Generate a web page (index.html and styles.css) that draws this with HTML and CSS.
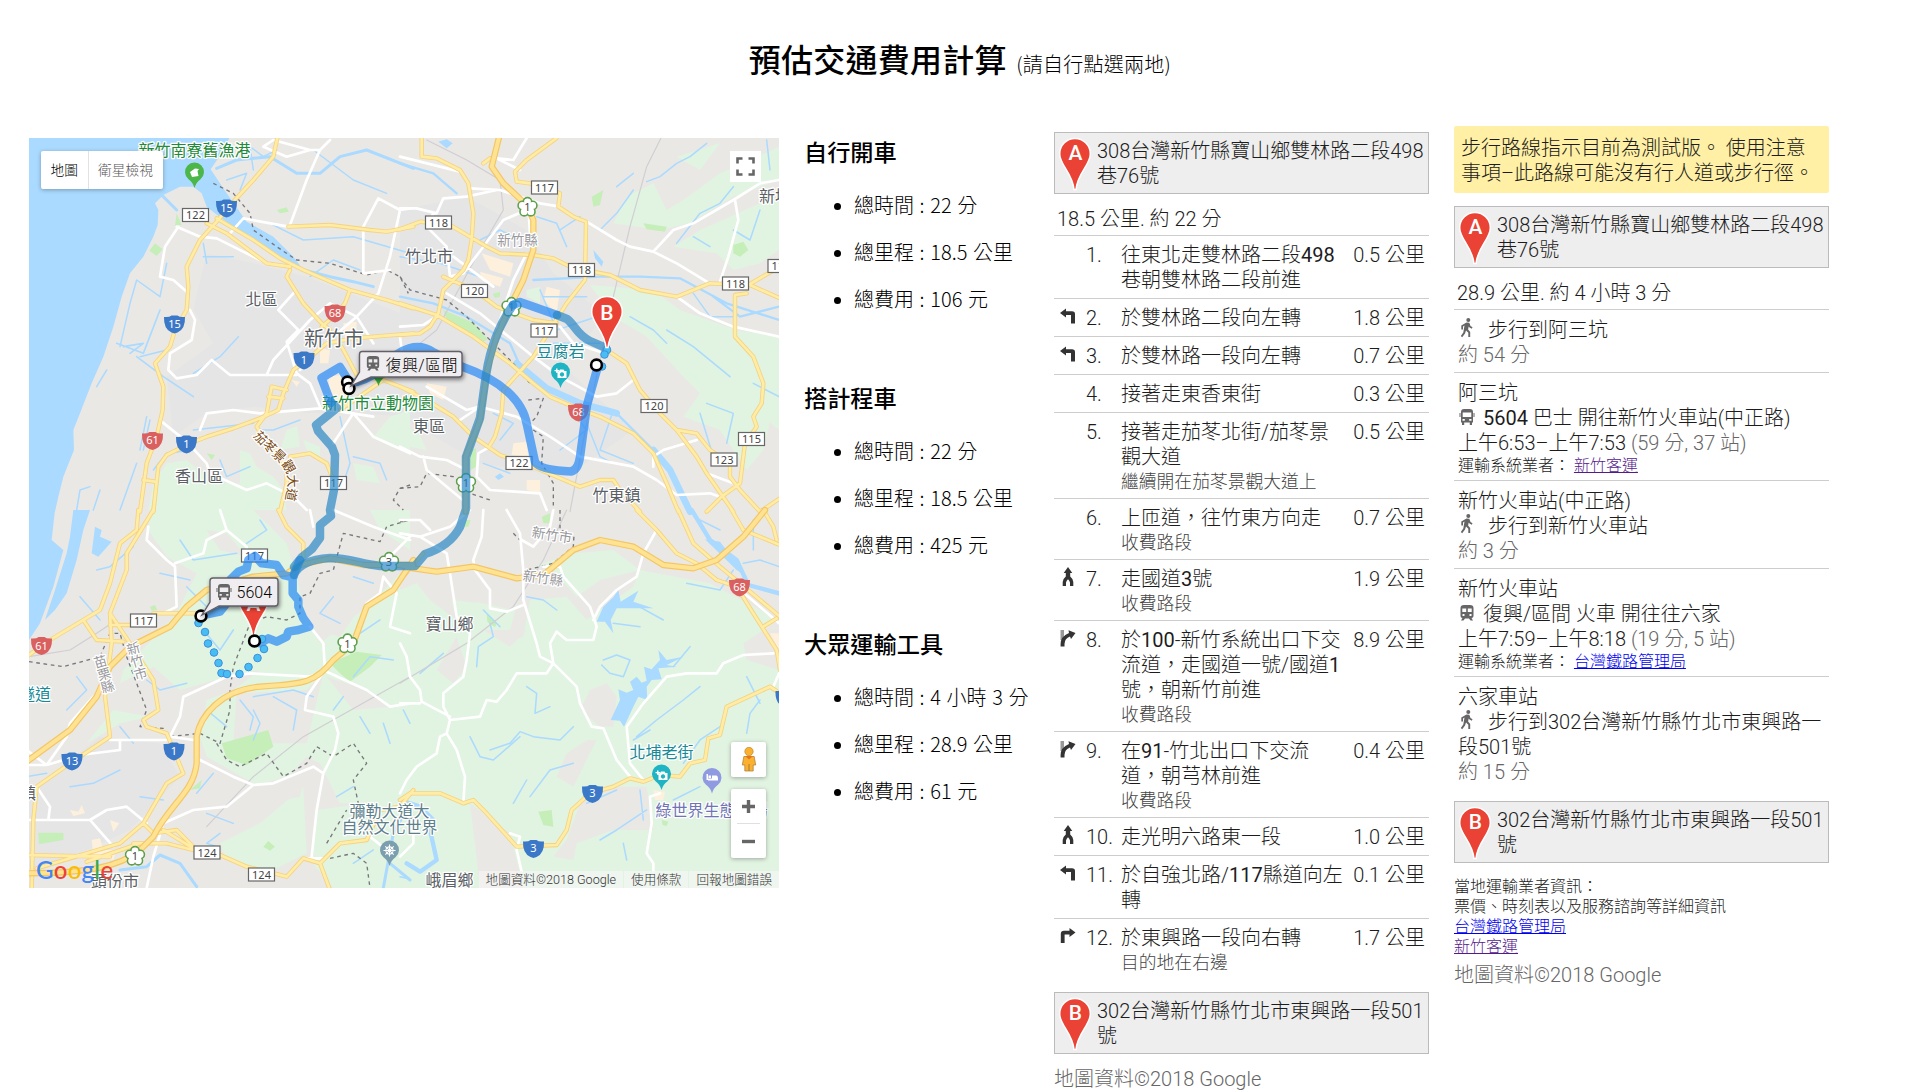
FILE: index.html
```html
<!DOCTYPE html>
<html lang="zh-Hant">
<head>
<meta charset="utf-8">
<title>預估交通費用計算</title>
<link rel="stylesheet" href="styles.css">
</head>
<body>
<svg class="sprite" width="0" height="0" aria-hidden="true">
  <defs>
    <symbol id="i-left" viewBox="0 0 16 20"><path d="M0 7 6 2.500V5.200H12Q15 5.200 15 8V17.500H11V9H6V11.500Z"/></symbol>
    <symbol id="i-right" viewBox="0 0 16 20"><path d="M15.500 6.500 9.500 2V4.800H4Q.8 4.800 .8 8V17H4.600V8.500H9.500V11Z"/></symbol>
    <symbol id="i-merge" viewBox="0 0 16 20"><path d="M8 0 12.300 6H10.200V9.500Q13.300 12 13.300 15V19H10V15.500Q9.500 13.500 8 12.300 6.500 13.500 6 15.500V19H2.700V15Q2.700 12 5.800 9.500V6H3.700Z"/></symbol>
    <symbol id="i-slight" viewBox="0 0 16 20"><path fill="#999" d="M.5 2H4V12H.5Z"/><path d="M15.500 5 8.500 2.200 9 5Q.6 8.500 .6 16V18.500H4.500V16Q4.700 10.500 10 8.600L11 11Z"/></symbol>
    <symbol id="i-walk" viewBox="0 0 14 20"><circle cx="8.300" cy="2" r="2"/><path d="M6.500 4.500 9.300 4.800 10.500 8 12.500 9.200 11.800 10.700 9.200 9.300 8.700 8.500 8.100 11.500 10.200 14V19H8.300V14.800L6 12.600 5 15.500 2.200 19.200.8 18 3.300 14.500 4.500 7.600 3 8.600V11.500H1.300V7.600Z"/></symbol>
    <symbol id="i-bus" viewBox="0 0 16 18"><path fill-rule="evenodd" d="M2 4Q2 1 5 1H11Q14 1 14 4V14.500H13V17H10.800V14.500H5.200V17H3V14.500H2ZM3.700 4.500V9H12.300V4.500ZM3.500 11V12.700H5.800V11ZM10.200 11V12.700H12.500V11ZM0.500 5H1.500V9H.5ZM14.500 5H15.500V9H14.500Z"/></symbol>
    <symbol id="i-train" viewBox="0 0 16 18"><path fill-rule="evenodd" d="M1.500 4Q1.500 1 5 1H11Q14.500 1 14.500 4V12Q14.500 14 12.500 14L14 16.500H11.500L10 14.500H6L4.500 16.500H2L3.500 14Q1.500 14 1.500 12ZM3.300 4.500V8H7.200V4.500ZM8.800 4.500V8H12.700V4.500ZM3.500 10V12H5.500V10ZM10.500 10V12H12.500V10Z"/></symbol>
    <symbol id="i-pin" viewBox="0 0 34 54"><path d="M17 1.500A15.300 15.300 0 0 1 32.300 17C32.300 28 19.500 36 18 52.500H16C14.500 36 1.700 28 1.700 17A15.300 15.300 0 0 1 17 1.500Z" fill="#ea4335" stroke="#fff" stroke-width="1.500"/></symbol>
  </defs>
</svg>

<h1 class="title">預估交通費用計算 <small>(請自行點選兩地)</small></h1>

<main class="board">
  <section class="map">
    <svg class="map-canvas" viewBox="29 138 750 750" width="750" height="750">
      <defs>
        <g id="main-roads">
          <path transform="translate(20 130) scale(.33333)" d="M775 10 760 80 700 150 640 215 590 275 540 330 500 410 505 470 500 540 465 600 450 650 405 700 430 770 428 840 410 920 380 1000 360 1145M1180 610 1000 625 920 640 860 690 820 720 790 790 775 840 720 865 640 895 560 920 510 940 440 975 415 1010 400 1145M590 265 700 330 780 385 850 420 990 480 1100 510 1180 535M560 280 620 310 740 400 810 410M810 420 800 440 850 520 905 580 930 600M990 480 975 520 940 560 905 590M805 290 930 285 1050 300 1100 305 1180 290M965 650 1010 735 1090 750 1180 785M1090 750 960 840M755 770 740 850 710 890 740 940 800 1010 800 1060 780 1145M755 770 800 780M745 800 790 805M810 980 870 970 920 1000 940 1050M370 1050 405 1055"/>
          <path transform="translate(400 130) scale(.33333)" d="M65 10V80L110 85 180 120 205 160 220 250 215 330 205 390 190 420 130 480 115 550 90 590 60 610 0 615M470 24 380 90 345 125 350 155 390 160 440 170 480 190 475 230 520 260 558 275 555 450 500 520 450 600 400 680 310 780 305 850 285 920 270 945M0 298 60 275 150 285 260 350 300 370 400 375 460 385 510 410 550 420 630 435 720 480 830 500 930 460 1050 465 1140 505M1050 462 1140 410M1040 490 1005 495V620L1060 680 1090 760 1085 820 1060 860 1070 890 1035 940 1020 1060 965 1100 920 1145M130 440 200 470 250 500 290 530 400 570 470 580M0 520 110 555 220 620 330 700 400 760 450 800 520 830 600 860 700 910 760 970 800 1060 835 1145M620 660 680 700 720 780 780 850 830 900 890 980 920 1030 1000 1145M830 900 890 910 930 960 990 1000V1040L1020 1080 1080 1145M1140 1105 1080 1145M0 770 80 810 160 860 220 920 300 975 400 1010 470 1040 540 1070 600 1050 640 1050 660 1080 720 1145M250 100 270 85"/>
          <path transform="translate(20 510) scale(.33333)" d="M400 0 320 130V180L270 310 275 400 255 560 270 680 150 760 50 830 40 930 35 1140M355 0 350 60 300 100 270 220 240 300 190 330 90 390 20 440M190 330 230 390 310 395M270 310 330 400 400 510 415 600 370 630 380 650 440 670 490 790 440 820 370 940 300 1000 50 1075M20 1035 270 1040M270 345H350M400 310H540M775 0 800 50 850 100V140M430 960 520 1015 600 1035 680 1070 800 1100 850 1045 900 1060 930 1140M900 1060 960 1000 1040 990 1080 900 1140 890 1180 840M370 940 400 970 470 960 520 1010M340 1000 440 1000 520 1020M200 1055 360 1000"/>
          <path transform="translate(400 510) scale(.33333)" d="M0 210 70 130M835 0 880 100 960 170 1140 320M710 0 770 60 830 130 890 160 950 210 1010 230 1060 310 1130 420 1140 480M1090 350 1130 325M995 0 1030 60 1140 105M1090 0 1120 50 1130 90M0 870 30 850 120 850 190 880 220 870 260 910 350 1010 470 1005 500 960 515 900 570 850 640 830 690 805 730 815 780 795 840 800 870 760 915 750 925 685 960 675 980 590 1110 530 1140 550"/>
        </g>
        <g id="freeways">
          <path transform="translate(400 130) scale(.33333)" d="M300 10 275 110 310 160 380 225 400 270V360L370 450 330 530 290 620 262 720 240 870 197 980V1145"/>
          <path transform="translate(20 510) scale(.33333)" d="M840 165 800 190 700 200 560 240 500 290 450 350 330 410 270 470 230 560 150 660 20 755M1180 150 1120 240 1040 290 1000 400 940 450C880 520 860 520 720 530 600 540 540 620 530 680V760C520 850 450 880 400 980L360 1020C300 1070 200 1090 20 1090M840 165 930 145 1030 165 1180 165"/>
          <path transform="translate(400 510) scale(.33333)" d="M0 165 40 175 110 185 220 170 350 205 430 195 520 120 600 90 700 110 790 165 880 175 950 150 1030 80 1095 0"/>
        </g>
        <path id="shield" d="M-10.500-7Q-5-6.500-3-8.500H3Q5-6.500 10.500-7 11 5 3 8.500L0 9.500-3 8.500Q-11 5-10.500-7Z"/>
        <rect id="plate" x="-13" y="-6.500" width="26" height="13" fill="#fff" stroke="#666" stroke-width="1.200"/>
        <g id="plum"><g fill="#fff" stroke="#5fa04e" stroke-width="2"><circle cy="-5.200" r="4"/><circle cx="5.200" cy="-1.500" r="4"/><circle cx="3.300" cy="4.700" r="4"/><circle cx="-3.300" cy="4.700" r="4"/><circle cx="-5.200" cy="-1.500" r="4"/></g><g fill="#fff"><circle cy="-5.200" r="3.400"/><circle cx="5.200" cy="-1.500" r="3.400"/><circle cx="3.300" cy="4.700" r="3.400"/><circle cx="-3.300" cy="4.700" r="3.400"/><circle cx="-5.200" cy="-1.500" r="3.400"/><circle r="5"/></g></g>
        <path id="poi" d="M0 15Q-1.500 9.500-6 6.300A9.500 9.500 0 1 1 6 6.300Q1.500 9.500 0 15Z"/>
        <path id="curve" d="M253 436C264 450 276 457 284 468 291 479 287 496 280 518"/>
      </defs>
      <rect x="29" y="138" width="750" height="750" fill="#eae8e5"/>

      <g class="urban">
        <path transform="translate(20 130) scale(.33333)" d="M560 370 700 400 860 440 1170 560V860L1000 850 870 850 700 830 560 850 460 920 440 740 580 640 520 540Z"/>
        <path transform="translate(400 130) scale(.33333)" d="M0 240 200 200 380 300 460 430 620 560 480 700 700 900 500 1040 240 1000 0 860Z"/>
        <path transform="translate(20 510) scale(.33333)" d="M27 850 240 680 420 700 480 800 330 960 27 1100Z"/>
      </g>
      <g class="green">
        <path transform="translate(20 130) scale(.33333)" d="M800 900 832 888 840 950 780 960ZM660 960 690 970 710 1010 760 1040 790 1080 800 1140H385L400 1060 440 1000 500 990 560 1040 590 1060 660 1060ZM1170 840V960L1110 950 1060 920 1110 860ZM850 930 900 950 900 980 860 960ZM1000 1000 1060 1010 1080 1060 1010 1050Z"/>
        <path transform="translate(400 130) scale(.33333)" d="M640 280 680 200 760 160 800 240 850 210 960 130 1050 90 1137 50V150L1000 200 870 280 780 300ZM830 80 960 40 900 120ZM820 350 900 300 1080 220 1137 200V360L1080 400 1000 420 950 370ZM570 465 760 480 840 540 1010 600 1137 620V760L1090 960 1040 1020 960 900 850 860 900 790 850 740 740 620 640 560ZM0 880 60 915 80 960 0 945ZM380 480 420 470 420 520 380 500ZM1060 680 1137 720V900L1100 870Z"/>
        <path transform="translate(20 510) scale(.33333)" d="M390 0H700L800 100 830 200 860 330 900 400 1040 290 1170 160V880H960L900 760 860 740 780 830 700 820 560 740 540 680 560 570 640 540 720 480 620 500 480 540 400 470 300 520 310 480 470 310 530 190 440 140 385 60ZM910 490 860 540 650 550 640 700 860 700ZM1050 0H1170V120L1080 60ZM890 900 1170 860V1134H940L870 1050ZM600 1000 720 940 850 830 860 1030 740 1090 620 1050ZM200 700 280 600 390 620 300 640Z"/>
        <path transform="translate(400 510) scale(.33333)" d="M0 180 150 270 250 280 340 300 400 170 520 130 640 120 720 180 930 220 1137 330V1134H0Z"/>
      </g>
      <g class="land">
        <path transform="translate(400 510) scale(.33333)" d="M0 180H130L170 330 90 270 50 220 0 240ZM380 170 450 170 530 260 600 210 720 180 700 230 600 300 560 330 500 260 390 270 370 380 320 400ZM620 520 650 560 640 650 600 650 540 600 570 540ZM640 830H740L760 960 640 960 530 1000 520 1050 460 1040 500 990 540 880ZM470 800 500 730 560 690 590 690 520 830ZM1030 400 1137 330V480L1040 450ZM210 880 330 970 370 1134H240L220 960ZM250 360 380 360 330 410ZM110 480 170 380 200 470 160 520Z"/>
        <path transform="translate(20 510) scale(.33333)" d="M900 200 1000 120 1100 180 1030 280 960 380 920 370ZM560 60 620 70 680 140 600 120ZM920 500 1040 540 1110 590 1000 600ZM700 830 860 780 840 860 740 880Z"/>
      </g>
      <g class="park">
        <path transform="translate(20 130) scale(.33333)" d="M405 340 428 358 410 378 388 362ZM470 250 485 285 465 288ZM770 240 800 232 806 245 780 250ZM560 970 585 975 575 990Z"/>
        <path transform="translate(400 130) scale(.33333)" d="M130 540 220 578 264 628 240 640 140 570ZM575 200 610 180 600 225 580 230ZM1000 345 1030 335 1045 360 1020 380 1000 370ZM730 280 800 290 795 305 740 298ZM278 492 300 485 300 500 285 504ZM210 960 228 955V1010L212 1020Z"/>
        <path transform="translate(20 510) scale(.33333)" d="M930 460 1010 425 1085 435 1050 470 990 515 960 490ZM605 700 640 690 745 660 760 710 710 745 680 765 620 745ZM55 968H130V990L57 1003ZM730 1010 745 993 765 1010 750 1022ZM510 840 545 810 540 835ZM390 290 405 285 412 300 395 302Z"/>
        <path transform="translate(400 510) scale(.33333)" d="M415 905 455 900 460 950 430 945ZM260 310 290 340 285 352 262 335ZM425 20 450 10 450 40 430 40ZM195 30 212 30 205 50 192 52ZM785 930 805 935 800 948 788 945Z"/>
      </g>
      <g class="sand">
        <path transform="translate(20 130) scale(.33333)" d="M925 740 960 735 1000 820 960 825 930 800ZM900 655 930 660 925 700 900 700ZM970 580 1010 575V620L975 625ZM815 750 840 755 830 770Z"/>
        <path transform="translate(400 130) scale(.33333)" d="M245 370 340 400 330 440 270 420ZM240 425 310 445 300 470 245 450ZM440 470 480 480 470 550 430 510ZM340 940 380 935 385 980 335 975ZM80 760 140 770 130 810 90 790ZM380 1050 420 1050 420 1090 380 1080Z"/>
        <path transform="translate(20 510) scale(.33333)" d="M215 990 240 985 250 1020 290 1020 280 1050 220 1035ZM150 900 175 905 185 885 195 910 160 918ZM270 930 298 940 280 965Z"/>
        <path transform="translate(400 510) scale(.33333)" d="M760 840 795 845 790 870 765 870ZM1110 370 1137 370V420Z"/>
      </g>
      <g class="water">
        <path transform="translate(20 130) scale(.33333)" d="M0 0H640L605 70 572 118 620 190 680 275 760 320 820 380 850 420 790 385 720 340 640 290 600 262 560 230 545 190 520 170 480 170 430 195 405 220 415 240 413 285 400 320 370 380 330 430 305 500 280 590 250 680 215 760 180 850 160 900 162 960 130 1040 115 1100 105 1145H0Z"/>
        <path transform="translate(20 510) scale(.33333)" d="M0 0H105L95 90 130 120 100 230 60 340 27 390H0ZM160 0H210L190 60 170 150 140 250 105 300 75 330 105 240 140 130 150 80ZM225 50 245 60 240 80 275 95 235 140 215 130Z"/>
        <path transform="translate(400 130) scale(.33333)" d="M115 35 140 28 158 40 140 55ZM580 360 610 395 605 410 585 385ZM285 1040 300 1030 312 1040 295 1050Z"/>
        <path transform="translate(400 510) scale(.33333)" d="M590 335 610 290 640 262 655 240 662 275 715 242 700 275 760 295 650 295 632 330 640 370 615 335ZM632 630 660 570 655 538 680 548 700 540 690 515 710 500 725 518 740 512 732 470 755 478 780 450 775 420 800 450 850 440 800 465 830 470 775 475 785 508 755 510 740 530 742 570 715 560 700 590 672 650 660 632ZM915 88 960 95 1040 200 1010 180Z"/>
      </g>
      <g class="river">
        <path transform="translate(20 130) scale(.33333)" stroke-width="9" d="M590 115 650 90 750 80 830 130 900 130 960 80 1040 60 1180 115M850 420 930 440 1000 455 1060 470M420 190 470 240M560 180 620 230"/>
        <path transform="translate(20 130) scale(.33333)" stroke-width="5" d="M290 640 370 670 420 540M350 680 430 740 520 800M310 650 370 640 330 670"/>
        <path transform="translate(400 130) scale(.33333)" stroke-width="20" d="M350 700 440 775 540 820 650 850M760 960 810 1020 870 1145"/>
        <path transform="translate(400 130) scale(.33333)" stroke-width="7" d="M650 850 700 900 760 960M0 500 100 520 200 560 330 640 370 730M0 100 100 130 170 190M400 450 600 440 720 440 840 445 980 520 1137 570M940 500 1020 560 1137 530"/>
        <path transform="translate(400 510) scale(.33333)" stroke-width="13" d="M875 0 930 90 1010 150 1045 225 1137 250M90 960 110 1050 60 1085 20 1060M0 870 60 890 100 930"/>
        <path transform="translate(20 510) scale(.33333)" stroke-width="9" d="M300 1080 380 1070 420 1035 480 1060 530 1130M1170 880 1120 970 1090 1134M1110 1060 1170 1110"/>
      </g>
      <g class="stream">
        <path transform="translate(20 130) scale(.33333)" d="M440 400 420 500 350 450 330 520 300 650M700 120 690 50 730 80 770 60M620 150 680 130 660 180M750 280 850 330 1000 320 1170 370M560 400 550 340M655 620 600 680 520 730M550 380H640M440 660 360 680M230 770 260 720M380 860 360 960M390 870 370 960M400 1020 440 970 520 960M520 900 700 880M840 870 760 900 720 900M300 1140 350 1000M1000 980 1080 1000 1100 1050M600 990 620 1040 690 1010M870 440 940 390 1020 420M170 1140 180 1080 210 1070M220 1140 240 1080M880 60 1000 150 1100 190M960 860 990 1000 970 1060"/>
        <path transform="translate(400 130) scale(.33333)" d="M740 155 780 140 830 100 870 80 920 40M700 180 650 250 600 300M1000 170 960 220 900 250 830 340M480 300 540 260M420 480 470 600 590 560 620 620M0 380 120 400 240 440M430 500 560 500M690 560 760 600 800 640M460 640 600 640M640 840 600 960 700 1000M560 880 600 980 640 1000M980 940 1000 850 920 820M800 600 880 650 990 740M240 330 300 300 340 320M410 260 470 280 500 350M700 130 650 170M930 350 880 320M1080 240 1050 330 1000 300M1137 800 1060 760M900 850 940 980M480 960 560 900 520 850M300 930 340 880 280 850M330 1030 250 1000M880 490 930 560 1000 560M1100 30 1110 120"/>
        <path transform="translate(20 510) scale(.33333)" d="M230 180 270 170 340 110M140 600 200 540 170 500M420 190 510 210M500 230 560 290 600 260M640 360 600 420 550 360M480 90 520 150 650 130M700 600 720 640 700 690M560 600 620 650M660 570 700 620 690 660M500 520 420 540 380 510M940 260 900 310 960 340M1000 200 1060 220M1090 640 1110 700M1020 620 1050 670M760 560 830 600 820 660M300 780 220 820 150 830M430 870 360 860M560 910 640 940M530 850 580 790M600 970 560 1000 590 1010M1000 500 1050 440 1120 450M880 560 820 540 700 560M680 100 740 60 720 30M970 560 940 600M1060 1020 1000 1060M300 650 340 700M950 860 1000 830M20 800 80 790M240 330 180 260M1080 330 1020 370"/>
        <path transform="translate(400 510) scale(.33333)" d="M230 470 235 410 280 380 270 340M380 260 430 270 470 300M640 340 720 350M700 280 790 330M610 450 650 435 690 450 670 500 630 490 605 465M380 530 410 550 405 610 450 590M270 720 330 700 360 665 400 680 480 690 520 650M360 680 280 750 240 740 210 680M390 860 450 780 520 760M710 680 770 630 850 570 900 530M700 690 750 660M1000 180 960 240 860 220M1137 170 1080 150 1030 160M60 490 130 430M10 600 30 640M1040 670 1050 610 1080 570M600 990 650 960 740 900M720 840 730 930M650 840 560 880M850 760 900 690 960 650M1040 500 1080 580M820 870 900 830M250 300 300 350M870 410 820 470M380 810 340 880M680 1050 670 1000M0 1100 20 1105M900 30 960 60M1060 30 1060 120"/>
      </g>
      <g class="rail">
        <path transform="translate(400 130) scale(.33333)" d="M790 10 740 110 690 290 640 500 560 880 510 1145M80 30 200 90 300 150 310 240 240 360 110 600 60 640"/>
        <path transform="translate(400 510) scale(.33333)" d="M0 520 200 400 340 290 430 150 500 0"/>
        <path transform="translate(20 510) scale(.33333)" d="M27 440 150 420 230 370 290 330M560 950 700 800 850 680 1170 500"/>
      </g>
      <g class="border">
        <path transform="translate(20 130) scale(.33333)" d="M580 160 640 190 690 250 700 300 770 350 830 390 930 400 1040 435 1100 420 1140 440 1165 490M1170 1065 1140 1075 1120 1110 1150 1140"/>
        <path transform="translate(400 130) scale(.33333)" d="M0 440 30 480 140 510 200 560 280 640 340 700 390 760M385 810 430 805 410 860 390 880 400 900 430 920 425 1000 460 1060 460 1140M0 1075 60 1070 80 1030 160 1040 210 1090 270 1110"/>
        <path transform="translate(20 510) scale(.33333)" d="M27 455 130 470 240 440 270 370 300 370 320 440 380 600 360 650 430 655 450 680 540 670 600 700 630 600 630 540 640 470 690 340 740 320 800 330 840 310 840 260 870 250 900 190 940 180 970 70 1080 95 1100 50 1170 30M590 700 620 750 660 770 740 730 790 800 860 760 890 710 940 740 1000 700 1040 760 1000 810 1015 880M920 1000 980 900M930 1045 1000 1030 1040 1060 1050 1134"/>
        <path transform="translate(400 510) scale(.33333)" d="M480 0 480 60 522 75 520 110 460 160 380 180M340 70 360 90M0 35H20"/>
      </g>
      <g class="street">
        <path transform="translate(20 130) scale(.33333)" d="M730 50 760 30 870 60 900 60 930 30M730 50 800 80 870 60M900 60 860 150 810 285M630 310 670 265 805 290M470 290 540 320 590 325 650 355 740 400M475 290 435 350 420 440 460 450 500 485M510 540 525 570 515 630 450 670 445 720 470 745 530 735 575 690 630 735H830M1075 205 1140 240 1110 380 1075 490 1010 560 870 680 840 720M1075 205 1030 290V430L1110 420M1140 240 1170 235M820 490 775 540 835 600 800 635 830 730 870 760 900 830M740 735 760 690 870 570 930 520 1010 560 1060 640M425 875 500 935 560 1000 570 1030 680 1080 740 1060 820 1100 860 1140M540 900 560 850 640 840 720 850 900 835 1060 860M1000 850 1060 920 1170 970M940 940 1000 850"/>
        <path transform="translate(400 130) scale(.33333)" d="M0 80 180 125M380 24 340 90 290 85 360 120M210 175 300 180 420 220 480 230M0 235H50L110 250 130 205 200 200 290 180M100 250 80 290 140 350 150 440 190 470M380 240 310 270 190 430 150 440M380 370 340 450 300 570M385 230 390 310M560 275 650 330 690 350 760 365 830 400 880 430 920 455M760 365 820 300 880 280 1000 210 1080 160 1137 150M1005 210 1015 270 985 380 960 455M140 490 240 550 400 680 480 740 590 800 650 790 700 750M480 590 520 640 600 665M830 500 900 550 1000 590 1137 620M0 590 70 585 110 560M160 380 280 470M80 770 200 840 240 830 350 860 450 920 540 980 700 1010 770 1050 830 1095 930 1090 960 1100M890 930 790 960 760 980V1010M0 950 60 980 140 990 200 1020M70 980 80 1020 200 1120M270 950 235 970 230 1040 270 1080 420 1090 440 1140M920 1030 1000 1060M180 870 240 830M0 620 10 700"/>
        <path transform="translate(20 510) scale(.33333)" d="M385 50 380 90 440 150 465 170 470 290 430 310M465 160 550 130 560 90 620 60 600 0M620 60 680 110V140M870 350 910 400 915 480 860 560 855 600 940 620 955 670 945 720 910 790 890 900 875 1040M915 480 870 500 690 490 620 500 490 560 480 620 450 680 520 690M270 690H450M910 790 880 770 760 820 700 825 640 800 540 750M700 825 620 890 520 900 430 940 400 1040 380 1134M27 765 80 765 140 680 150 640 220 560M20 720 80 765 180 735 300 720V690M50 830 90 890 85 930M27 930H210L260 900 320 890 380 940M210 930 280 1010M920 485 1040 540 1110 590 1170 580M1170 370 1110 350 1130 250 1090 200M1090 200 1080 250 1040 280M940 0 1060 50 1170 90M1170 80 1100 150M880 50 870 0M850 1045H910M1050 980 1100 1020"/>
        <path transform="translate(400 510) scale(.33333)" d="M250 0 245 80 220 150 225 180 270 240V295L320 305 370 285M320 0 360 70 370 180V270L410 400 420 440 460 460M150 190 140 130 60 80M150 190 170 320 210 370 200 450 190 500 130 550 130 590 150 630 140 670 170 720 195 800 190 880M0 400 20 440 30 500 60 540 65 575 150 620M0 580H60M150 630 240 620 260 570 290 575 320 540 350 490 440 490 460 460 450 400 470 365 500 390 580 390 590 350 570 290 490 200 480 170 430 170M580 330 600 290 650 240 710 200 730 130 770 60M460 460 530 530 540 580 575 650 610 655 650 750 690 800M730 810 690 760 680 650 730 580 800 500 860 490 950 490 970 460 1030 435 1120 430M140 670 120 680 110 730 50 770 20 810 0 850M780 850 750 860 755 940 740 1030 760 1060V1085M330 970 360 980 350 1020 365 1085M365 90 400 110 450 50 460 0M0 70 60 80 150 50 210 0M0 30H60L90 60M1137 490 1120 530M1010 230 1137 340M40 970V1000L0 1040"/>
      </g>
      <g class="road-case"><use href="#main-roads"/></g>
      <g class="road-fill"><use href="#main-roads"/></g>
      <g class="fwy-case"><use href="#freeways"/></g>
      <g class="fwy-fill"><use href="#freeways"/></g>

      <g class="place">
        <text x="261.500" y="304.500">北區</text><text x="334" y="346" class="city">新竹市</text>
        <text x="429" y="432">東區</text><text x="199" y="482">香山區</text><text x="429" y="262">竹北市</text>
        <text x="616.500" y="501">竹東鎮</text><text x="449.500" y="630">寶山鄉</text><text x="449.500" y="886">峨眉鄉</text>
        <text x="115" y="887">頭份市</text><text x="783" y="202">新埔鎮</text><text x="12" y="799">竹南鎮</text>
        <text x="517.500" y="245" class="county">新竹縣</text>
        <text x="552" y="540" class="county" transform="rotate(9 552 535)">新竹市</text>
        <text x="543" y="583" class="county" transform="rotate(8 543 578)">新竹縣</text>
        <text class="county" transform="rotate(-16 137 661)"><tspan x="137" y="653">新</tspan><tspan x="137" y="666">竹</tspan><tspan x="137" y="679">市</tspan></text>
        <text class="county" transform="rotate(-16 104 674)"><tspan x="104" y="666">苗</tspan><tspan x="104" y="679">栗</tspan><tspan x="104" y="692">縣</tspan></text>
        <text x="194.500" y="155.500" class="park-name">新竹南寮舊漁港</text><text x="378" y="409" class="park-name">新竹市立動物園</text>
        <text x="560.500" y="357" class="spot">豆腐岩</text><text x="661.500" y="758" class="spot">北埔老街</text><text x="35" y="700" class="spot">隧道</text>
        <text x="389.500" y="817" class="temple">彌勒大道大</text><text x="389.500" y="833" class="temple">自然文化世界</text>
        <text x="711.500" y="816" class="farm">綠世界生態農場</text>
        <text class="avenue"><textPath href="#curve">茄苳景觀大道</textPath></text>
      </g>

      <g fill="#3c78c8">
        <use href="#shield" x="226.500" y="208"/><use href="#shield" x="174.500" y="324"/><use href="#shield" x="304" y="360"/><use href="#shield" x="186.500" y="444"/><use href="#shield" x="72" y="761"/><use href="#shield" x="174" y="751"/><use href="#shield" x="592.500" y="793.500"/><use href="#shield" x="533.500" y="848.500"/><use href="#shield" x="786" y="698"/>
      </g>
      <g fill="#d9605f">
        <use href="#shield" x="335" y="313"/><use href="#shield" x="152.500" y="440.500"/><use href="#shield" x="578.500" y="412"/><use href="#shield" x="41.500" y="645.500"/><use href="#shield" x="739.500" y="587"/>
      </g>
      <g class="shield-no">
        <text x="226.500" y="211.500">15</text><text x="174.500" y="327.500">15</text><text x="304" y="363.500">1</text><text x="186.500" y="447.500">1</text><text x="72" y="765">13</text><text x="174" y="755">1</text><text x="592.500" y="797">3</text><text x="533.500" y="852">3</text>
        <text x="335" y="316.500">68</text><text x="152.500" y="444">61</text><text x="578.500" y="415.500">68</text><text x="41.500" y="649.500">61</text><text x="739.500" y="590.500">68</text>
      </g>
      <g>
        <use href="#plate" x="195.500" y="215"/><use href="#plate" x="333.500" y="483"/><use href="#plate" x="544.500" y="187.500"/><use href="#plate" x="438.500" y="222.500"/><use href="#plate" x="581.500" y="270"/><use href="#plate" x="735.500" y="283.500"/><use href="#plate" x="781" y="266"/><use href="#plate" x="474.500" y="291"/><use href="#plate" x="544" y="330.500"/><use href="#plate" x="654" y="406"/><use href="#plate" x="751.500" y="439"/><use href="#plate" x="724" y="459.500"/><use href="#plate" x="519" y="463"/><use href="#plate" x="254.500" y="555.500"/><use href="#plate" x="143.500" y="620.500"/><use href="#plate" x="207" y="852.500"/><use href="#plate" x="261.500" y="874.500"/>
        <use href="#plum" x="527.500" y="207"/><use href="#plum" x="511.500" y="307"/><use href="#plum" x="466" y="483"/><use href="#plum" x="389" y="562"/><use href="#plum" x="347.500" y="643.500"/><use href="#plum" x="135" y="856"/>
      </g>
      <g class="plate-no">
        <text x="195.500" y="219">122</text><text x="333.500" y="487">117</text><text x="544.500" y="191.500">117</text><text x="438.500" y="226.500">118</text><text x="581.500" y="274">118</text><text x="735.500" y="287.500">118</text><text x="781" y="270">118</text><text x="474.500" y="295">120</text><text x="544" y="334.500">117</text><text x="654" y="410">120</text><text x="751.500" y="443">115</text><text x="724" y="463.500">123</text><text x="519" y="467">122</text><text x="254.500" y="559.500">117</text><text x="143.500" y="624.500">117</text><text x="207" y="856.500">124</text><text x="261.500" y="878.500">124</text>
        <text x="527.500" y="211">1</text><text x="511.500" y="311">1</text><text x="466" y="487">1</text><text x="389" y="566">3</text><text x="347.500" y="647.500">1</text><text x="135" y="860">1</text>
      </g>

      <use href="#poi" x="194.500" y="173" fill="#4cb748"/><path d="M190 172 195 168.500 199 169 197.500 171 198.500 176 192 177ZM189.500 174 191 177" fill="#fff"/>
      <use href="#poi" x="378.500" y="371" fill="#3aa845"/>
      <use href="#poi" x="560.500" y="373" fill="#1eb4c4"/><use href="#poi" x="661.500" y="775" fill="#1eb4c4"/>
      <g fill="#fff"><path id="cam" fill-rule="evenodd" d="M557.500 371H559L560 369.500H563.500L564.500 371H566.500V378H557.500ZM562 372.300A2.200 2.200 0 1 0 562.010 372.300ZM554.500 370H556V368.500H557.500V370H559V371.200H557.500V372.700H556V371.200H554.500Z"/><use href="#cam" x="101" y="402"/></g>
      <use href="#poi" x="712" y="778.500" fill="#8f9ae0"/><path d="M706.500 774H708V780H706.500ZM708 778.500H718V780.500H708ZM712 775.500H716.500Q718 776 718 778.500H712ZM708.500 775.500H711V778H708.500Z" fill="#fff"/>
      <use href="#poi" x="389.500" y="851" fill="#7b9fae"/><g fill="none" stroke="#fff" stroke-width="1.100"><circle cx="389.500" cy="850.500" r="3.600"/><path d="M383.500 850.500H395.500M389.500 844.500V856.500M385.300 846.300 393.700 854.700M393.700 846.300 385.300 854.700"/></g>

      <g class="route">
        <g stroke="#1f86f7" stroke-opacity=".68">
          <path transform="translate(20 510) scale(.33333)" d="M550 315 600 305 620 280 640 240 630 210 655 185 680 175 685 150 705 138 725 160 770 165 790 195 820 202M720 400 745 385 770 395 800 380 805 365 835 360 868 350 850 325 835 290 835 270 818 250V200L840 150"/>
          <path d="M513 305 520 302 557 315M331 403 321.500 378 340 367 350 383Q365 382 380 370C400 345 420 343 433 352L463 367C500 380 523 400 527 425L535 462Q540 470 571 471.500 578 470 580 457L587 405 598 366"/>
        </g>
        <g stroke="#2585c5" stroke-opacity=".68">
          <path d="M331 402 337 408 316 425 318 431 332 447 335 455 334 490 330 510 331 516 320 525 320 538 312 549 302 557 294 567"/>
          <path d="M294 575Q300 560 330 558C350 558 360 564 380 566H415L425 554Q450 546 460 527L466 509V457L480 418 486 375Q492 335 513 305M557 315 567 319C575 325 577 335 590 341L606 348"/>
        </g>
      </g>
      <g class="steps">
        <circle cx="198.500" cy="623"/><circle cx="205" cy="632"/><circle cx="208" cy="643.500"/><circle cx="214" cy="652.500"/><circle cx="218.500" cy="663"/><circle cx="221.500" cy="673"/><circle cx="227" cy="674"/><circle cx="239.500" cy="674"/><circle cx="248.500" cy="667"/><circle cx="257.500" cy="658"/><circle cx="264" cy="649"/><circle cx="262" cy="639"/><circle cx="607" cy="350"/><circle cx="604.500" cy="354.500"/><circle cx="602" cy="366.500"/>
      </g>
      <use href="#i-pin" x="590" y="295" width="34" height="54"/><text x="607" y="319.500" class="pin-letter">B</text>
      <use href="#i-pin" x="236.500" y="583" width="34" height="54"/><text x="253.500" y="611" class="pin-letter">A</text>
      <g fill="#fff" stroke="#000" stroke-width="2.600"><circle cx="596.500" cy="365" r="5.400"/><circle cx="347.500" cy="382" r="5.400"/><circle cx="349" cy="388.500" r="5.400"/><circle cx="254.500" cy="641" r="5.400"/><circle cx="201" cy="616" r="5.400"/></g>
      <g class="bubble">
        <path d="M213 578H275Q278 578 278 581V603Q278 606 275 606H219L202 615 210 602V581Q210 578 213 578Z"/>
        <path d="M362 351.500H459Q462 351.500 462 354.500V374Q462 377 459 377H371L351 386 359.500 372V354.500Q359.500 351.500 362 351.500Z"/>
      </g>
      <use href="#i-bus" x="216" y="583" width="16" height="18" fill="#666"/><text x="236.500" y="597.500" class="bubble-text">5604</text>
      <use href="#i-train" x="365" y="355" width="16" height="17" fill="#666"/><text x="385.500" y="371" class="bubble-text" textLength="72">復興/區間</text>
      <text x="36" y="879" class="logo"><tspan fill="#4285f4">G</tspan><tspan fill="#ea4335">o</tspan><tspan fill="#fbbc05">o</tspan><tspan fill="#4285f4">g</tspan><tspan fill="#34a853">l</tspan><tspan fill="#ea4335">e</tspan></text>
    </svg>
    <div class="map-type"><span class="on">地圖</span><span>衛星檢視</span></div>
    <div class="ctl fullscreen"><svg width="19" height="19" viewBox="0 0 19 19"><path d="M1.500 6.500V1.500H6.500M12.500 1.500H17.500V6.500M17.500 12.500V17.500H12.500M6.500 17.500H1.500V12.500" fill="none" stroke="#666" stroke-width="2.600"/></svg></div>
    <div class="ctl pegman"><svg width="16" height="25" viewBox="0 0 16 25"><circle cx="8" cy="4.500" r="4.200" fill="#fbb12f" stroke="#b67a20" stroke-width=".6"/><path d="M2.800 9.500H13.200L14.700 18H12.200V24H3.800V18H1.300Z" fill="#fbb12f" stroke="#a87b36" stroke-width=".7"/><path d="M4 9H12L8 12.500Z" fill="#e2761b"/><path d="M8 17V24" stroke="#a87b36"/></svg></div>
    <div class="ctl zoom"><span><svg width="13" height="13" viewBox="0 0 13 13"><path d="M0 6.500H13M6.500 0V13" stroke="#666" stroke-width="3.400"/></svg></span><i></i><span><svg width="13" height="13" viewBox="0 0 13 13"><path d="M0 6.500H13" stroke="#666" stroke-width="3.400"/></svg></span></div>
    <div class="legal"><span>地圖資料©2018 Google</span><span>使用條款</span><span>回報地圖錯誤</span></div>
  </section>

  <section class="costs">
    <article><h2>自行開車</h2><ul><li>總時間 : 22 分</li><li>總里程 : 18.5 公里</li><li>總費用 : 106 元</li></ul></article>
    <article><h2>搭計程車</h2><ul><li>總時間 : 22 分</li><li>總里程 : 18.5 公里</li><li>總費用 : 425 元</li></ul></article>
    <article><h2>大眾運輸工具</h2><ul><li>總時間 : 4 小時 3 分</li><li>總里程 : 28.9 公里</li><li>總費用 : 61 元</li></ul></article>
  </section>

  <section class="route-panel driving">
    <div class="stop"><span class="pin"><svg width="34" height="54"><use href="#i-pin"/></svg><b>A</b></span><p>308台灣新竹縣寶山鄉雙林路二段498<br>巷76號</p></div>
    <p class="sum">18.5 公里. 約 22 分</p>
    <ol class="legs">
      <li><i></i><span>1.</span><p>往東北走雙林路二段<b>498</b><br>巷朝雙林路二段前進</p><em>0.5 公里</em></li>
      <li><i><svg width="16" height="20"><use href="#i-left"/></svg></i><span>2.</span><p>於雙林路二段向左轉</p><em>1.8 公里</em></li>
      <li><i><svg width="16" height="20"><use href="#i-left"/></svg></i><span>3.</span><p>於雙林路一段向左轉</p><em>0.7 公里</em></li>
      <li><i></i><span>4.</span><p>接著走東香東街</p><em>0.3 公里</em></li>
      <li><i></i><span>5.</span><p>接著走茄苳北街/茄苳景<br>觀大道<small>繼續開在茄苳景觀大道上</small></p><em>0.5 公里</em></li>
      <li><i></i><span>6.</span><p>上匝道，往竹東方向走<small>收費路段</small></p><em>0.7 公里</em></li>
      <li><i><svg width="16" height="20"><use href="#i-merge"/></svg></i><span>7.</span><p>走國道<b>3</b>號<small>收費路段</small></p><em>1.9 公里</em></li>
      <li><i><svg width="16" height="20"><use href="#i-slight"/></svg></i><span>8.</span><p>於<b>100</b>-新竹系統出口下交<br>流道，走國道一號/國道<b>1</b><br>號，朝新竹前進<small>收費路段</small></p><em>8.9 公里</em></li>
      <li><i><svg width="16" height="20"><use href="#i-slight"/></svg></i><span>9.</span><p>在<b>91</b>-竹北出口下交流<br>道，朝芎林前進<small>收費路段</small></p><em>0.4 公里</em></li>
      <li><i><svg width="16" height="20"><use href="#i-merge"/></svg></i><span>10.</span><p>走光明六路東一段</p><em>1.0 公里</em></li>
      <li><i><svg width="16" height="20"><use href="#i-left"/></svg></i><span>11.</span><p>於自強北路/<b>117</b>縣道向左<br>轉</p><em>0.1 公里</em></li>
      <li><i><svg width="16" height="20"><use href="#i-right"/></svg></i><span>12.</span><p>於東興路一段向右轉<small>目的地在右邊</small></p><em>1.7 公里</em></li>
    </ol>
    <div class="stop"><span class="pin"><svg width="34" height="54"><use href="#i-pin"/></svg><b>B</b></span><p>302台灣新竹縣竹北市東興路一段501<br>號</p></div>
    <p class="credit">地圖資料©2018 Google</p>
  </section>

  <section class="route-panel transit">
    <p class="warn">步行路線指示目前為測試版。 使用注意<br>事項–此路線可能沒有行人道或步行徑。</p>
    <div class="stop"><span class="pin"><svg width="34" height="54"><use href="#i-pin"/></svg><b>A</b></span><p>308台灣新竹縣寶山鄉雙林路二段498<br>巷76號</p></div>
    <p class="sum">28.9 公里. 約 4 小時 3 分</p>
    <ol class="rides">
      <li><p class="walk"><svg width="14" height="20"><use href="#i-walk"/></svg>步行到阿三坑</p><p class="dim">約 54 分</p></li>
      <li><p>阿三坑</p><p class="ride"><svg width="16" height="18"><use href="#i-bus"/></svg><b>5604</b> 巴士 開往新竹火車站(中正路)</p><p>上午6:53–<wbr>上午7:53 <span class="dim">(59 分, 37 站)</span></p><p class="agency">運輸系統業者： <a class="seen">新竹客運</a></p></li>
      <li><p>新竹火車站(中正路)</p><p class="walk"><svg width="14" height="20"><use href="#i-walk"/></svg>步行到新竹火車站</p><p class="dim">約 3 分</p></li>
      <li><p>新竹火車站</p><p class="ride"><svg width="16" height="18"><use href="#i-train"/></svg>復興/區間 火車 開往往六家</p><p>上午7:59–<wbr>上午8:18 <span class="dim">(19 分, 5 站)</span></p><p class="agency">運輸系統業者： <a>台灣鐵路管理局</a></p></li>
      <li><p>六家車站</p><p class="walk"><svg width="14" height="20"><use href="#i-walk"/></svg>步行到302台灣新竹縣竹北市東興路一</p><p>段501號</p><p class="dim">約 15 分</p></li>
    </ol>
    <div class="stop"><span class="pin"><svg width="34" height="54"><use href="#i-pin"/></svg><b>B</b></span><p>302台灣新竹縣竹北市東興路一段501<br>號</p></div>
    <div class="agencies"><p>當地運輸業者資訊：</p><p>票價、時刻表以及服務諮詢等詳細資訊</p><p><a>台灣鐵路管理局</a></p><p><a class="seen">新竹客運</a></p></div>
    <p class="credit">地圖資料©2018 Google</p>
  </section>
</main>
</body>
</html>
```
FILE: styles.css
```css
* { box-sizing: border-box; }
body { margin: 0; height: 1091px; overflow: hidden; background: #fff; color: #000; font-family: "Noto Sans CJK TC", sans-serif; }
p, h1, h2, ul, ol { margin: 0; padding: 0; }
ul, ol { list-style: none; }
.sprite { position: absolute; }

.title { height: 126px; padding-top: 34px; text-align: center; font-size: 32px; line-height: 48px; letter-spacing: .25px; font-weight: 500; white-space: nowrap; }
.title small { margin-left: 2px; font-size: 20px; font-weight: 300; }

.board { display: flex; align-items: flex-start; padding-left: 29px; }

/* map */
.map { position: relative; width: 750px; height: 750px; margin-top: 12px; overflow: hidden; flex: none; }
.map-canvas { display: block; }
.urban { fill: #e5e5e6; }
.land { fill: #eae8e5; }
.green { fill: #e1f3e1; }
.park { fill: #c6eeb9; }
.sand { fill: #fdf0dc; }
.water { fill: #aadaff; }
.river, .stream, .rail, .border, .street, .road-case, .road-fill, .fwy-case, .fwy-fill, .route { fill: none; stroke-linejoin: round; stroke-linecap: round; }
.river { stroke: #aadaff; }
.stream { stroke: #aadaff; stroke-width: 4.5; }
.rail { stroke: #cfced2; stroke-width: 3.5; }
.border { stroke: #77777a; stroke-width: 4; stroke-dasharray: 11 11; stroke-linecap: butt; }
.street { stroke: #fff; stroke-width: 8; }
.road-case { stroke: #f6d27c; stroke-width: 13; }
.road-fill { stroke: #ffeca6; stroke-width: 8; }
.fwy-case { stroke: #f3c664; stroke-width: 19; }
.fwy-fill { stroke: #ffe393; stroke-width: 12; }
.route > g { stroke-width: 8.5; }
.route > g > path[transform] { stroke-width: 25.5; }
.place text { font-size: 16px; fill: #5b5f66; text-anchor: middle; stroke: #fff; stroke-width: 2.5; stroke-linejoin: round; paint-order: stroke; }
.place .city { font-size: 20px; }
.place .county { font-size: 13.5px; fill: #98989c; }
.place .park-name { fill: #1e8a3a; }
.place .spot { fill: #178a97; }
.place .temple { fill: #5d7f8b; }
.place .farm { fill: #6f74b6; }
.place .avenue { font-size: 13px; fill: #7a4a12; text-anchor: start; }
.shield-no text, .plate-no text { font: 11px "Noto Sans", sans-serif; text-anchor: middle; fill: #fff; }
.plate-no text { fill: #444; }
.steps circle { r: 3.8px; fill: #48bdf4; stroke: #3b90dd; stroke-width: 1; }
.pin-letter { font: 500 21px Roboto, sans-serif; fill: #fff; text-anchor: middle; }
.bubble { fill: #efedef; stroke: #64606a; stroke-width: 1.4; filter: drop-shadow(1px 2px 2px rgba(0, 0, 0, .5)); }
.bubble-text { font: 300 16px Roboto, "Noto Sans CJK TC", sans-serif; fill: #000; }
.logo { font: 500 24px Lato, sans-serif; letter-spacing: .3px; }
.map-type { position: absolute; left: 12px; top: 13px; display: flex; height: 38px; background: #fff; border-radius: 2px; box-shadow: 0 1px 4px rgba(0, 0, 0, .3); font-size: 13.75px; line-height: 37px; font-weight: 300; color: #565656; }
.map-type span { padding: 0 9.5px; }
.map-type .on { color: #000; border-right: 1px solid #e2e2e2; }
.ctl { position: absolute; display: flex; align-items: center; justify-content: center; background: #fff; border-radius: 2px; box-shadow: 0 1px 4px rgba(0, 0, 0, .3); }
.fullscreen { left: 701px; top: 13px; width: 31px; height: 31px; box-shadow: none; border-radius: 0; }
.pegman { left: 702px; top: 604px; width: 35px; height: 35px; }
.zoom { left: 702px; top: 651px; width: 35px; height: 69px; flex-direction: column; }
.zoom span { height: 34px; display: flex; align-items: center; }
.zoom i { width: 23px; height: 1px; background: #e0e0e0; }
.legal { position: absolute; right: 0; bottom: 0; display: flex; gap: 1px; height: 17px; font: 300 12.6px/17px Roboto, "Noto Sans CJK TC", sans-serif; color: #333; white-space: nowrap; }
.legal span { padding: 0 7px; background: rgba(245, 245, 245, .7); }

/* cost summaries */
.costs { width: 249px; padding-left: 25px; flex: none; }
.costs article { height: 246px; }
.costs h2 { padding-top: 8px; height: 55px; font-size: 23.2px; line-height: 34px; font-weight: 500; }
.costs li { position: relative; height: 47px; padding-left: 50px; font-size: 20px; line-height: 47px; font-weight: 300; word-spacing: 1.2px; white-space: nowrap; }
.costs li::before { content: ""; position: absolute; left: 30px; top: 22px; width: 7px; height: 7px; border-radius: 50%; background: #000; }

/* directions */
.route-panel { width: 375px; flex: none; font: 300 20px/25px Roboto, "Noto Sans CJK TC", sans-serif; color: #1c1c1c; white-space: nowrap; }
.route-panel b { font-weight: 400; }
.driving { margin: 6px 0 0 26px; }
.transit { margin-left: 25px; }
.stop { display: flex; height: 62px; padding: 4px 0 0 3px; border: 1px solid #bbb; background: #eee; }
.stop p { padding: 2px 0 0 5px; }
.pin { position: relative; width: 34px; height: 54px; }
.route-panel .pin b { position: absolute; left: 1px; right: 0; top: 4px; text-align: center; color: #fff; font-size: 21px; font-weight: 500; }
.sum { height: 41px; padding: 13px 3px 0; }
.legs li { display: grid; grid-template-columns: 26px 35px 1fr auto; padding: 7px 4px 5px 6px; border-top: 1px solid #cdcdcd; }
.legs li i { height: 25px; fill: #333; }
.legs svg { display: block; }
.legs em { font-style: normal; }
.legs small { display: block; font-size: 17.8px; line-height: 23px; color: #444; }
.legs + .stop { margin-top: 13px; }
.credit { padding-top: 13px; color: #666; }
.warn { height: 67px; margin-bottom: 13px; padding: 10px 7px 0; border-radius: 2px; background: #fff0a5; }
.rides li { padding: 8px 4px 4px; border-top: 1px solid #cdcdcd; }
.rides p { height: 25px; }
.rides + .stop { margin-top: 12px; }
.rides svg { fill: #666; vertical-align: -1px; }
.walk svg { margin: 0 14px 0 2px; }
.ride svg { margin: 0 8px 0 1px; }
.dim { color: #666; }
.rides .agency { height: 20px; font-size: 16px; line-height: 20px; }
.agencies { padding-top: 14px; font-size: 16px; line-height: 20px; }
.agencies + .credit { padding-top: 6px; }
a { color: #00e; text-decoration: underline; }
a.seen { color: #551a8b; }
```
